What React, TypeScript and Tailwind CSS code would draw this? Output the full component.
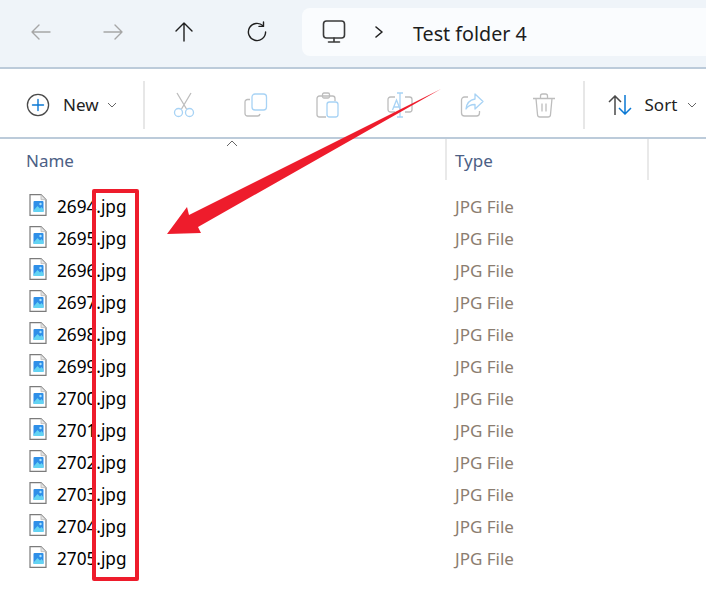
import React from "react";

const font = { fontFamily: '"Noto Sans", "Open Sans", sans-serif' };
const names = ["2694","2695","2696","2697","2698","2699","2700","2701","2702","2703","2704","2705"];

function Nav({ d, color, extra }: { d: string; color: string; extra?: string }) {
  return (
    <svg width="22" height="22" viewBox="0 0 22 22" fill="none" stroke={color} strokeWidth="1.4" strokeLinecap="round" strokeLinejoin="round">
      <path d={d} />
      {extra && <path d={extra} />}
    </svg>
  );
}

function FileIcon() {
  return (
    <svg width="18" height="22" viewBox="0 0 18 22" className="mb-1 shrink-0">
      <path d="M1 .7H12L17 5.7V21.3H1Z" fill="#fff" stroke="#7b7b7b" strokeWidth="1.2" />
      <path d="M12 .7V5.7H17Z" fill="#e4e4e4" stroke="#b5b5b5" strokeWidth="0.8" />
      <rect x="4.500" y="7" width="10" height="11" rx="1" fill="#2f8fe8" />
      <path d="M4.500 16.500 8.500 12l2.500 2.500L12.500 13l2 2.400V18H4.500Z" fill="#63d3f2" />
      <circle cx="11.500" cy="10" r="1.200" fill="#a9e2fb" />
    </svg>
  );
}

function Row({ name }: { name: string }) {
  return (
    <div className="flex h-8 items-center">
      <div className="flex w-[455px] items-center pl-[29px]">
        <FileIcon />
        <span className="ml-[10px] text-[17.2px] text-black">{name}.jpg</span>
      </div>
      <span className="text-[17px] text-[#8b7d70]">JPG File</span>
    </div>
  );
}

export default function App() {
  return (
    <div className="relative h-[605px] w-[706px] overflow-hidden bg-white" style={font}>
      {/* Navigation bar */}
      <div className="flex h-[69px] items-start border-b-2 border-[#bccbda] bg-[#eff4f9] pt-2">
        <div className="flex h-12 w-[302px] items-center pl-[30px]">
          <Nav color="#a6a6a6" d="M2 11H20M2 11l7-7M2 11l7 7" />
          <div className="w-[50px]" />
          <Nav color="#a6a6a6" d="M2 11H20M20 11l-7-7M20 11l-7 7" />
          <div className="w-[49px]" />
          <Nav color="#1f1f1f" d="M11 20V2M11 2 3 10M11 2l8 8" />
          <div className="w-[51px]" />
          <Nav color="#1f1f1f" d="M17 4.800A8.600 8.600 0 1 0 19.600 11" extra="M17.500 1V5.400H13" />
        </div>
        <div className="flex h-12 flex-1 items-center rounded-l-lg bg-[#fafcfe] pl-[20px]">
          <svg width="24" height="24" viewBox="0 0 24 24" fill="none" stroke="#3a3a3a" strokeWidth="1.6" strokeLinecap="round">
            <rect x="1.500" y="1" width="21" height="17" rx="3" />
            <path d="M12 18v4M6.500 22h11" />
          </svg>
          <svg width="10" height="14" viewBox="0 0 10 14" fill="none" stroke="#222" strokeWidth="1.6" className="ml-[28px]" strokeLinecap="round" strokeLinejoin="round">
            <path d="M2 2l6 5-6 5" />
          </svg>
          <span className="ml-[29px] mt-[3px] text-[19.7px] text-[#1d1d1d]">Test folder 4</span>
        </div>
      </div>

      {/* Command bar */}
      <div className="flex h-[70px] items-center border-b-2 border-[#bccbda] bg-white pt-1">
        <svg width="24" height="24" viewBox="0 0 24 24" className="ml-[26px]" fill="none">
          <circle cx="12" cy="12" r="10.600" stroke="#4a4a4a" strokeWidth="1.300" />
          <path d="M12 6.500v11M6.500 12h11" stroke="#0a78d4" strokeWidth="1.400" strokeLinecap="round" />
        </svg>
        <span className="ml-[13px] text-[17px] text-[#222]">New</span>
        <svg width="10" height="6" viewBox="0 0 10 6" className="ml-[8px]" fill="none" stroke="#666" strokeWidth="1"><path d="M1 1l4 4 4-4" /></svg>
        <div className="ml-[26px] h-12 w-0.5 bg-[#e7e7e7]" />
        <svg width="22" height="26" viewBox="1 0 22 26" className="ml-[28px]" fill="none" strokeWidth="1.300">
          <path d="M5 1l9.500 16M19 1 9.500 17" stroke="#bdbdbd" />
          <circle cx="6.500" cy="20.500" r="4" stroke="#a8d3f5" />
          <circle cx="17.500" cy="20.500" r="4" stroke="#a8d3f5" />
        </svg>
        <svg width="24" height="24" viewBox="0 0 24 24" className="ml-[49px]" fill="none" strokeWidth="1.300">
          <path d="M6 6.500H3.500A2.500 2.500 0 0 0 1 9v11.500A2.500 2.500 0 0 0 3.500 23h10a2.500 2.500 0 0 0 2.500-2" stroke="#bdbdbd" />
          <rect x="8" y="1" width="14.500" height="16" rx="3" stroke="#a8d3f5" />
        </svg>
        <svg width="23" height="26" viewBox="0 0 23 26" className="ml-[48px]" fill="none" strokeWidth="1.300">
          <path d="M10 25H3.500A2.500 2.500 0 0 1 1 22.500V6.500A2.500 2.500 0 0 1 3.500 4h13A2.500 2.500 0 0 1 19 6.500V9" stroke="#bdbdbd" />
          <rect x="6.500" y="1" width="7" height="5" rx="1.500" stroke="#bdbdbd" />
          <rect x="11" y="10" width="11" height="15" rx="2.500" stroke="#a8d3f5" />
        </svg>
        <svg width="26" height="26" viewBox="0 0 26 26" className="ml-[48px]" fill="none" strokeWidth="1.300">
          <path d="M8 5H3.500A2.500 2.500 0 0 0 1 7.500v10A2.500 2.500 0 0 0 3.500 20H8M18 5h4.500A2.500 2.500 0 0 1 25 7.500v10a2.500 2.500 0 0 1-2.500 2.500H18" stroke="#bdbdbd" />
          <path d="M13 1v24M10 1h6M10 25h6" stroke="#a8d3f5" />
          <path d="M5.500 18 9.500 8l4 10M7 15h5" stroke="#a8d3f5" />
        </svg>
        <svg width="24" height="24" viewBox="0 0 24 24" className="ml-[47px]" fill="none" strokeWidth="1.300" strokeLinejoin="round">
          <path d="M8 4H4.500A3 3 0 0 0 1.500 7v13a3 3 0 0 0 3 3h12a3 3 0 0 0 3-3v-2" stroke="#bdbdbd" />
          <path d="M15 1l8 7.500-8 7.500v-4.500c-4 0-7 1.200-9 4.500 .5-5 3.500-9 9-10Z" stroke="#a8d3f5" />
        </svg>
        <svg width="22" height="25" viewBox="0 0 22 25" className="ml-[49px]" fill="none" stroke="#bdbdbd" strokeWidth="1.300">
          <path d="M0 5.500h22M7.500 5V3a2 2 0 0 1 2-2h3a2 2 0 0 1 2 2v2M3 5.500l1.500 16a2.500 2.500 0 0 0 2.500 2.500h8a2.500 2.500 0 0 0 2.500-2.500L19 5.500M9 10.500v8M13 10.500v8" />
        </svg>
        <div className="ml-[28px] h-12 w-0.5 bg-[#e7e7e7]" />
        <svg width="24" height="20" viewBox="0 0 24 20" className="ml-[23px]" fill="none" strokeWidth="1.500">
          <path d="M7 20V1M1 7l6-6 6 6" stroke="#4a4a4a" />
          <path d="M17 0v19M11 13l6 6 6-6" stroke="#0a78d4" />
        </svg>
        <span className="ml-[13px] text-[17px] text-[#222]">Sort</span>
        <svg width="10" height="6" viewBox="0 0 10 6" className="ml-[10px]" fill="none" stroke="#666" strokeWidth="1"><path d="M1 1l4 4 4-4" /></svg>
      </div>

      {/* Column headers */}
      <div className="relative flex h-[41px] items-center">
        <div className="w-[445px] pl-[26px] pt-[2px] text-[17px] text-[#4c6085]">Name</div>
        <div className="flex h-full w-[204px] items-center border-x-2 border-[#e9e9e9] pl-2 pt-[2px] text-[17px] text-[#4c6085]">Type</div>
        <svg width="12" height="7" viewBox="0 0 12 7" className="absolute left-[226px] top-[1px]" fill="none" stroke="#666" strokeWidth="1"><path d="M1 6l5-5 5 5" /></svg>
      </div>

      {/* Files */}
      <div className="pt-[11px]">
        {names.map((n) => <Row key={n} name={n} />)}
      </div>

      {/* Annotations */}
      <div className="absolute left-[92px] top-[189px] h-[392px] w-[47px] rounded-[2px] border-[4px] border-[#ee1c2c]" />
      <svg width="706" height="605" className="absolute left-0 top-0">
        <polygon points="441,89 198,227 201,233 167,234 187,207 189,215" fill="#ee1c2c" />
      </svg>
    </div>
  );
}
